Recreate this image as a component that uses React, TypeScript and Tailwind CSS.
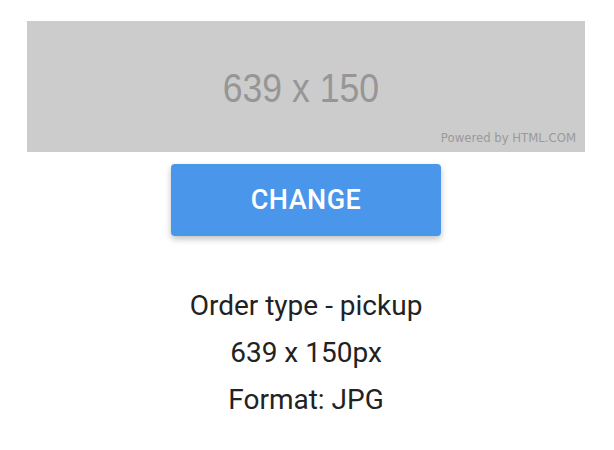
export default function App() {
  return (
    <div className="w-[612px] h-[450px] bg-white flex flex-col items-center pt-[21px]" style={{ fontFamily: 'Roboto, sans-serif' }}>
      <div className="relative w-[558px] h-[131px] bg-[#cccccc] flex items-center justify-center">
        <span className="mt-[2px] mr-[10px] text-[#969696] text-[40px] leading-none scale-x-[0.89]" style={{ fontFamily: '"Liberation Sans Narrow", "Liberation Sans", sans-serif' }}>639 x 150</span>
        <span className="absolute right-[9px] bottom-[7px] text-[11.7px] leading-none text-[#9a9a9a]" style={{ fontFamily: '"DejaVu Sans", sans-serif' }}>Powered by HTML.COM</span>
      </div>
      <button className="mt-[12px] w-[270px] h-[72px] rounded-[4px] bg-[#4a96eb] text-white text-[27px] font-medium tracking-[0.5px] shadow-[0_3px_6px_rgba(0,0,0,0.25)]">CHANGE</button>
      <div className="mt-[46px] flex flex-col items-center text-[#222222] text-[28px] leading-[47px]">
        <div>Order type - pickup</div>
        <div>639 x 150px</div>
        <div>Format: JPG</div>
      </div>
    </div>
  );
}
